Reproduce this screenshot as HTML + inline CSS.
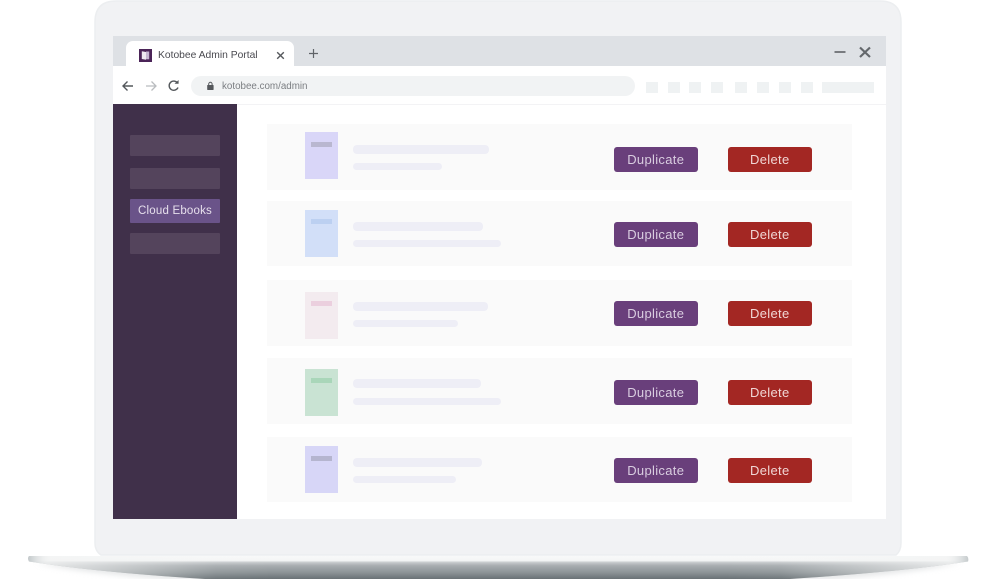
<!DOCTYPE html>
<html><head><meta charset="utf-8">
<style>
html,body{margin:0;padding:0;background:#fff}
#p{position:relative;width:997px;height:579px;overflow:hidden;background:#fff;font-family:"Liberation Sans",sans-serif;filter:blur(.35px)}
#p div{position:absolute;box-sizing:border-box}
.row{left:267px;width:585px;background:#fafafa}
.bk{left:305px;width:33px;height:47px}
.bar{left:311px;width:21px;height:5px}
.ln{left:353px;background:#eeeef6;border-radius:4px}
.h1{height:8.5px}.h2{height:7px}
.btn{height:25px;width:83.5px;border-radius:3px;font-size:13px;line-height:25px;text-align:center;letter-spacing:.32px}
.d{left:614px;background:#693f7b;color:#d9cde0}
.x{left:728px;background:#a32723;color:#f0d6d4}
.side{left:130px;width:90px;height:21px;background:#54445c;border-radius:1px}
.sq{top:82px;height:10.5px;background:#eff2f3}
</style></head><body>
<div id="p">
<svg style="position:absolute;left:0;top:0" width="997" height="579" viewBox="0 0 997 579">
<defs>
<linearGradient id="b" gradientUnits="userSpaceOnUse" x1="0" y1="556" x2="0" y2="579"><stop offset="0" stop-color="#f8f9f9"/><stop offset=".2" stop-color="#f4f5f5"/><stop offset=".28" stop-color="#c6cacc"/><stop offset=".42" stop-color="#a8adb0"/><stop offset=".72" stop-color="#8c9396"/><stop offset="1" stop-color="#697175"/></linearGradient>
<linearGradient id="f" gradientUnits="userSpaceOnUse" x1="28" y1="0" x2="969" y2="0"><stop offset="0" stop-color="#f3f4f4" stop-opacity=".9"/><stop offset=".08" stop-color="#f3f4f4" stop-opacity=".55"/><stop offset=".2" stop-color="#f3f4f4" stop-opacity=".05"/><stop offset=".26" stop-color="#f3f4f4" stop-opacity="0"/><stop offset=".74" stop-color="#f3f4f4" stop-opacity="0"/><stop offset=".8" stop-color="#f3f4f4" stop-opacity=".05"/><stop offset=".92" stop-color="#f3f4f4" stop-opacity=".55"/><stop offset="1" stop-color="#f3f4f4" stop-opacity=".9"/></linearGradient>
<linearGradient id="e" gradientUnits="userSpaceOnUse" x1="28" y1="0" x2="969" y2="0"><stop offset="0" stop-color="#c2c8ca"/><stop offset=".025" stop-color="#f2f3f3" stop-opacity="0"/><stop offset=".975" stop-color="#f2f3f3" stop-opacity="0"/><stop offset="1" stop-color="#c2c8ca"/></linearGradient>
<filter id="bl" x="-5%" y="-50%" width="110%" height="200%"><feGaussianBlur stdDeviation="3"/></filter>
</defs>
<path d="M36 563 Q90 574 170 579 H830 Q905 574 960 563 Z" fill="#cfd2d4" opacity=".55" filter="url(#bl)"/>
<path d="M29 556 H967 Q969 558 968 561.5 Q900 572 790 579 H205 Q95 572 29 561.5 Q27 558 29 556Z" fill="url(#b)"/>
<path d="M29 556 H967 Q969 558 968 561.5 Q900 572 790 579 H205 Q95 572 29 561.5 Q27 558 29 556Z" fill="url(#f)"/>
<path d="M29 556 H967 Q969 558 968 561.5 Q900 572 790 579 H205 Q95 572 29 561.5 Q27 558 29 556Z" fill="url(#e)"/>
<path d="M116 1 H880 Q901 1 901 22 V543 Q901 551 896 555 H101 Q95 551 95 543 V22 Q95 1 116 1Z" fill="#f1f2f4" stroke="#eceef0" stroke-width="1.5"/>
</svg>

<div style="left:113px;top:36px;width:773px;height:483px;background:#fff"></div>
<div style="left:113px;top:36px;width:773px;height:30px;background:#dee1e5"></div>
<div style="left:126px;top:41px;width:168px;height:25px;background:#fff;border-radius:7px 7px 0 0"></div>
<svg style="position:absolute;left:139px;top:49px" width="13" height="13" viewBox="0 0 13 13"><rect width="13" height="13" fill="#4b2458"/><path d="M2.8 2.2 L7 3 V10.8 L2.8 10Z" fill="#eee9f1"/><path d="M7 2.5 H10.2 V10.3 H7Z" fill="#c6b6d2"/></svg>
<div style="left:158px;top:49px;font-size:10.3px;line-height:14px;color:#4a4a50;white-space:nowrap">Kotobee Admin Portal</div>
<svg style="position:absolute;left:276px;top:51px" width="9" height="9" viewBox="0 0 9 9"><path d="M1.2 1.2 L7.8 7.8 M7.8 1.2 L1.2 7.8" stroke="#55585c" stroke-width="1.4"/></svg>
<svg style="position:absolute;left:308px;top:48px" width="11" height="11" viewBox="0 0 11 11"><path d="M5.5 1 V10 M1 5.5 H10" stroke="#5f6368" stroke-width="1.2"/></svg>
<svg style="position:absolute;left:833px;top:45px" width="40" height="14" viewBox="0 0 40 14"><path d="M1.5 7 H12.5" stroke="#6c7074" stroke-width="1.8"/><path d="M27 2.5 L37 12 M37 2.5 L27 12" stroke="#64686c" stroke-width="2.2"/></svg>

<svg style="position:absolute;left:121px;top:78px" width="62" height="16" viewBox="0 0 62 16"><path d="M2 8 H12 M6.5 3.5 L2 8 L6.5 12.5" fill="none" stroke="#54585c" stroke-width="1.4"/><path d="M25 8 H35 M30.5 3.5 L35 8 L30.5 12.5" fill="none" stroke="#b9bcbf" stroke-width="1.3"/><path d="M56.5 5 A4.6 4.6 0 1 0 57 9.5" fill="none" stroke="#54585c" stroke-width="1.4"/><path d="M53.5 5.8 H57.6 V2" fill="#54585c" stroke="none"/></svg>
<div style="left:191px;top:76px;width:444px;height:20px;background:#f1f3f4;border-radius:10px"></div>
<svg style="position:absolute;left:206px;top:81px" width="9" height="10" viewBox="0 0 9 10"><rect x="1.2" y="4" width="6.4" height="5" rx=".6" fill="#55585c"/><path d="M2.7 4.2 V3 A1.7 1.7 0 0 1 6.1 3 V4.2" fill="none" stroke="#55585c" stroke-width="1"/></svg>
<div style="left:222px;top:80px;font-size:9.8px;line-height:13px;color:#7b7e82;white-space:nowrap">kotobee.com/admin</div>
<div class="sq" style="left:646px;width:12px"></div>
<div class="sq" style="left:668px;width:12px"></div>
<div class="sq" style="left:689px;width:12px"></div>
<div class="sq" style="left:711px;width:12px"></div>
<div class="sq" style="left:735px;width:12px"></div>
<div class="sq" style="left:757px;width:12px"></div>
<div class="sq" style="left:779px;width:12px"></div>
<div class="sq" style="left:801px;width:12px"></div>
<div class="sq" style="left:822px;width:52px"></div>
<div style="left:113px;top:104px;width:773px;height:1px;background:#f3f3f5"></div>

<div style="left:113px;top:104px;width:124px;height:415px;background:#40304a"></div>
<div class="side" style="top:135px"></div>
<div class="side" style="top:168px"></div>
<div class="side" style="top:199px;height:24px;background:#6a5389;color:#e6dfec;font-size:11.5px;line-height:25px;text-align:center;letter-spacing:.2px;white-space:nowrap">Cloud Ebooks</div>
<div class="side" style="top:233px"></div>

<div class="row" style="top:124px;height:66px"></div>
<div class="row" style="top:201px;height:65px"></div>
<div class="row" style="top:280px;height:66px"></div>
<div class="row" style="top:358px;height:66px"></div>
<div class="row" style="top:437px;height:65px"></div>

<div class="bk" style="top:132px;background:#d9d6f8"></div><div class="bar" style="top:141.5px;background:#b9b7d0"></div>
<div class="bk" style="top:210px;background:#d2dff8"></div><div class="bar" style="top:219px;background:#bcd0f1"></div>
<div class="bk" style="top:292px;background:#f3ebef"></div><div class="bar" style="top:301px;background:#ebcfde"></div>
<div class="bk" style="top:369px;background:#c9e3d3"></div><div class="bar" style="top:378px;background:#a9d6b9"></div>
<div class="bk" style="top:446px;background:#d7d6f7"></div><div class="bar" style="top:456px;background:#b5b5cf"></div>

<div class="ln h1" style="top:145px;width:136px"></div><div class="ln h2" style="top:163px;width:89px"></div>
<div class="ln h1" style="top:222px;width:130px"></div><div class="ln h2" style="top:240px;width:148px"></div>
<div class="ln h1" style="top:302px;width:135px"></div><div class="ln h2" style="top:320px;width:105px"></div>
<div class="ln h1" style="top:379px;width:127.5px"></div><div class="ln h2" style="top:397.5px;width:148px"></div>
<div class="ln h1" style="top:458px;width:129px"></div><div class="ln h2" style="top:476px;width:103px"></div>

<div class="btn d" style="top:147px">Duplicate</div><div class="btn x" style="top:147px">Delete</div>
<div class="btn d" style="top:221.5px">Duplicate</div><div class="btn x" style="top:221.5px">Delete</div>
<div class="btn d" style="top:300.5px">Duplicate</div><div class="btn x" style="top:300.5px">Delete</div>
<div class="btn d" style="top:379.5px">Duplicate</div><div class="btn x" style="top:379.5px">Delete</div>
<div class="btn d" style="top:458px">Duplicate</div><div class="btn x" style="top:458px">Delete</div>
</div>
</body></html>
